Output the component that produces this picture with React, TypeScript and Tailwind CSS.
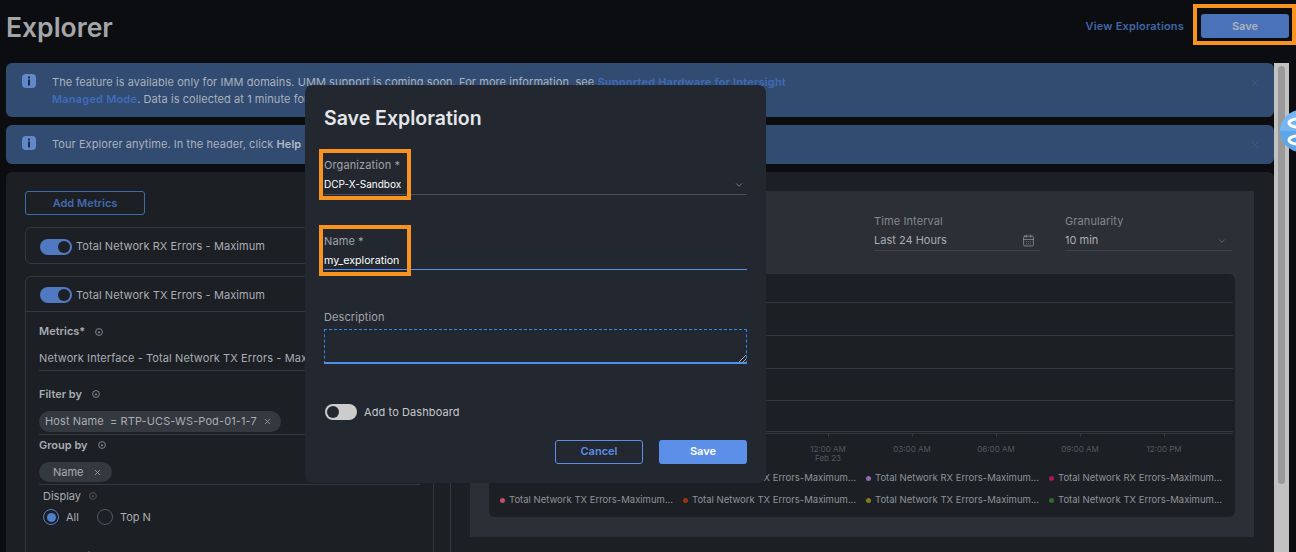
import { ChevronDown, X, CalendarDays } from "lucide-react";

const font = { fontFamily: "Inter, 'Liberation Sans', sans-serif" };

function InfoBadge() {
  return (
    <span className="flex h-[14px] w-[14px] shrink-0 items-center justify-center rounded-[4px] bg-[#6288cc]">
      <svg width="8" height="10" viewBox="0 0 8 10">
        <rect x="3" y="0.5" width="2" height="2" fill="#1f2b40" />
        <rect x="3" y="3.5" width="2" height="6" fill="#1f2b40" />
      </svg>
    </span>
  );
}

function Hint({ className }: { className?: string }) {
  return (
    <svg width="8" height="8" viewBox="0 0 8 8" className={className}>
      <circle cx="4" cy="4" r="3.4" fill="none" stroke="#8d9197" strokeWidth="0.9" />
      <circle cx="4" cy="4.2" r="1" fill="#8d9197" />
    </svg>
  );
}

function Toggle({ on }: { on: boolean }) {
  return on ? (
    <span className="flex h-4 w-8 shrink-0 items-center justify-end rounded-full bg-[#5179c2] pr-[2px]">
      <span className="h-3 w-3 rounded-full bg-[#1c1f24]" />
    </span>
  ) : (
    <span className="flex h-4 w-8 shrink-0 items-center rounded-full bg-[#cccccc] pl-[2px]">
      <span className="h-3 w-3 rounded-full bg-[#23272f]" />
    </span>
  );
}

function Alert({ tall, children }: { tall?: boolean; children: React.ReactNode }) {
  return (
    <div className={`flex rounded-md bg-[#324b70] pl-[16px] pr-[13px] ${tall ? "h-[54px] pt-[11px]" : "h-[39px] pt-[11px]"}`}>
      <InfoBadge />
      <div className="ml-[16px] flex-1 text-[11px] leading-[17px] tracking-[0.07px] text-[#a9b2bf]">{children}</div>
      <X size={12} strokeWidth={1} className="mt-[3px] text-[#566479]" />
    </div>
  );
}

const legendRows = [
  [
    ["RX", "#4f7fc0"],
    ["RX", "#3f9a9a"],
    ["RX", "#8e6bb5"],
    ["RX", "#b0125f"],
  ],
  [
    ["TX", "#c4506a"],
    ["TX", "#9a3412"],
    ["TX", "#857a1e"],
    ["TX", "#2f6b2a"],
  ],
];

const ticks = ["06:00 PM", "09:00 PM", "12:00 AM", "03:00 AM", "06:00 AM", "09:00 AM", "12:00 PM"];

export default function App() {
  return (
    <div style={font} className="relative h-[552px] w-[1296px] overflow-hidden bg-[#0c0d10] text-[#a9adb3]">
      <header className="flex h-[63px] items-start justify-between pl-[6px]">
        <h1 className="mt-[9px] text-[26.5px] font-semibold leading-[36px] text-[#a4a6a9]">Explorer</h1>
        <div className="mt-[14px] flex items-center gap-[17px] pr-[7px]">
          <span className="text-[11px] font-semibold tracking-[0.18px] text-[#3f66a8]">View Explorations</span>
          <button className="block h-6 w-[88px] rounded-[3px] bg-[#4a72b8] text-[11px] font-semibold text-[#aeb4bd]">Save</button>
        </div>
      </header>

      <div className="flex h-[489px]">
        <main className="ml-[6px] flex w-[1268px] flex-col gap-2">
          <Alert tall>
            The feature is available only for IMM domains. UMM support is coming soon. For more information, see{" "}
            <b className="font-semibold tracking-[0.2px] text-[#3f6cb8]">Supported Hardware for Intersight</b>
            <br />
            <b className="font-semibold tracking-[0.2px] text-[#3f6cb8]">Managed Mode</b>. Data is collected at 1 minute for the selected devices.
          </Alert>
          <Alert>
            Tour Explorer anytime. In the header, click <b className="font-semibold text-[#b4bac4]">Help</b> &gt; Tour Explorer.
          </Alert>

          <section className="flex h-[380px] overflow-hidden rounded-t-md bg-[#1c1f24] pl-[19px] pt-[19px]">
            {/* left column */}
            <div className="w-[409px] shrink-0">
              <button className="block h-6 w-[120px] rounded-[3px] border border-[#3f6cb0] text-[11px] font-semibold text-[#4369ad]">Add Metrics</button>
              <div className="mt-3 flex h-[37px] items-center gap-[4px] rounded-md border border-[#34383e] pl-[14px] pt-[2px]">
                <Toggle on />
                <span className="text-[11px] tracking-[0.07px]">Total Network RX Errors - Maximum</span>
              </div>
              <div className="mt-3 h-[400px] rounded-md border border-[#34383e]">
                <div className="flex h-[35px] items-center gap-[4px] border-b border-[#34383e] pl-[14px] pt-[2px]">
                  <Toggle on />
                  <span className="text-[11px] tracking-[0.07px]">Total Network TX Errors - Maximum</span>
                </div>
                <div className="pl-[13px] pr-[13px]">
                  <div className="mt-[12px] flex h-[15px] items-center gap-[10px] text-[11px] font-semibold">
                    Metrics* <Hint />
                  </div>
                  <div className="mt-[11px] h-[21px] whitespace-nowrap border-b border-[#34383e] text-[11px] tracking-[0.1px]">
                    Network Interface - Total Network TX Errors - Maximum
                  </div>
                  <div className="mt-[16px] flex h-[14px] items-center gap-[10px] text-[11px] font-semibold">
                    Filter by <Hint />
                  </div>
                  <div className="mt-[10px] h-[24px] border-b border-[#34383e]">
                    <span className="flex h-[21px] w-[242px] items-center gap-[6px] rounded-full bg-[#34383f] pl-[6px] text-[11px] tracking-[0.12px]">
                      <span>Host Name</span>
                      <span>= RTP-UCS-WS-Pod-01-1-7</span>
                      <X size={9} strokeWidth={2} />
                    </span>
                  </div>
                  <div className="mt-[3px] flex h-[14px] items-center gap-[10px] text-[11px] font-semibold">
                    Group by <Hint />
                  </div>
                  <div className="mt-[10px] h-[23px] border-b border-[#34383e]">
                    <span className="flex h-[20px] w-[73px] items-center gap-[9px] rounded-full bg-[#34383f] pl-[14px] text-[11px]">
                      Name <X size={9} strokeWidth={2} />
                    </span>
                  </div>
                  <div className="ml-[4px] mt-[4px] flex h-[14px] items-center gap-[8px] text-[11px]">
                    Display <Hint className="opacity-50" />
                  </div>
                  <div className="ml-[4px] mt-[6px] flex h-4 items-center text-[11px]">
                    <span className="flex h-4 w-4 items-center justify-center rounded-full border border-[#4f7fc8]">
                      <span className="h-[9px] w-[9px] rounded-full bg-[#4f7fc8]" />
                    </span>
                    <span className="ml-[7px]">All</span>
                    <span className="ml-[18px] h-4 w-4 rounded-full border border-[#55595f]" />
                    <span className="ml-[7px]">Top N</span>
                  </div>
                  <div className="ml-[4px] mt-[23px] flex gap-[9px] text-[11px]">
                    <span>Aggregate</span>
                    <span>Threshold</span>
                  </div>
                </div>
              </div>
            </div>

            {/* right column */}
            <div className="ml-[16px] h-[400px] flex-1 border-l border-[#34383e] pl-[19px] pr-[20px]">
              <div className="h-[346px] bg-[#2c2f35] px-[19px] pt-[24px]">
                <div className="flex h-[59px] justify-end gap-[25px] pr-[3px]">
                  <div className="w-[166px]">
                    <div className="text-[11px] leading-[12px] tracking-[0.1px] text-[#83878d]">Time Interval</div>
                    <div className="mt-[7px] flex h-[17px] items-start justify-between border-b border-[#3d4148] pr-[5px] text-[11px] leading-[12px] text-[#a9adb3]">
                      Last 24 Hours
                      <CalendarDays size={13} strokeWidth={1.2} className="text-[#a4a8ae]" />
                    </div>
                  </div>
                  <div className="w-[167px]">
                    <div className="text-[11px] leading-[12px] tracking-[0.1px] text-[#83878d]">Granularity</div>
                    <div className="mt-[7px] flex h-[17px] items-start justify-between border-b border-[#3d4148] pr-[5px] text-[11px] leading-[12px] text-[#a9adb3]">
                      10 min
                      <ChevronDown size={10} strokeWidth={1.2} className="mt-[2px] text-[#93979d]" />
                    </div>
                  </div>
                </div>
                <div className="h-[243px] rounded-md bg-[#1c1f24] pr-[2px] pt-[28px]">
                  <div className="h-[33px] border-t border-[#34383e]" />
                  <div className="h-[33px] border-t border-[#34383e]" />
                  <div className="h-[32px] border-t border-[#34383e]" />
                  <div className="h-[31px] border-t border-[#34383e]" />
                  <div className="h-[3px] border-y border-[#34383e]" />
                  <div className="flex justify-end pr-[27px] text-[8px] leading-[9px] text-[#55595f]">
                    {ticks.map((t) => (
                      <div key={t} className="flex w-[84px] flex-col items-center">
                        <span className="h-[3px] w-px bg-[#34383e]" />
                        <span className="mt-[8px] whitespace-nowrap">{t}</span>
                        {t === "12:00 AM" && <span>Feb 23</span>}
                      </div>
                    ))}
                  </div>
                  <div className="mt-[-7px] flex flex-col gap-[10px] pl-[11px]">
                    {legendRows.map((row, i) => (
                      <div key={i} className={`grid grid-cols-[183px_183px_183px_183px] text-[9.5px] leading-[12px] text-[#8f9399] ${i === 0 ? "mt-[16px]" : ""}`}>
                        {row.map(([k, c]) => (
                          <div key={c} className="flex items-center gap-[4px] whitespace-nowrap">
                            <span className="h-[5px] w-[5px] shrink-0 rounded-full" style={{ backgroundColor: c }} />
                            Total Network {k} Errors-Maximum...
                          </div>
                        ))}
                      </div>
                    ))}
                  </div>
                </div>
              </div>
            </div>
          </section>
        </main>

        <div className="h-full w-[15px] bg-[#c2c2c2] px-[4px] pt-[3px]">
          <div className="h-[418px] rounded-full bg-[#9a9a9a]" />
        </div>
      </div>

      {/* help bubble */}
      <svg width="16" height="42" viewBox="0 0 16 42" className="absolute left-[1280px] top-[110px]">
        <path d="M21 0a21 21 0 0 0-21 21h21z" fill="#74b6f2" />
        <path d="M21 42a21 21 0 0 1-21-21h21z" fill="#5ea6e6" />
        <ellipse cx="18" cy="13" rx="9" ry="4" fill="none" stroke="#ffffff" strokeWidth="3" />
        <ellipse cx="18" cy="30" rx="9" ry="4" fill="none" stroke="#ffffff" strokeWidth="3" />
      </svg>

      {/* modal */}
      <div className="absolute left-[305px] top-[85px] h-[398px] w-[461px] rounded-lg bg-[#23272f] px-[19px] pt-[21px]">
        <h2 className="whitespace-nowrap text-[19.5px] font-semibold leading-[24px] text-[#e4e6ea]">Save Exploration</h2>
        <label className="mt-[28px] block text-[11px] leading-[14px] tracking-[0.1px] text-[#a0a4ab]">Organization *</label>
        <div className="mt-[5px] flex h-[18px] items-start justify-between border-b border-[#4a4e55] text-[10px] leading-[14px] text-white">
          DCP-X-Sandbox
          <ChevronDown size={10} strokeWidth={1.3} className="mr-[3px] mt-[3px] text-[#c0c3c8]" />
        </div>
        <label className="mt-[39px] block text-[11px] leading-[14px] tracking-[0.1px] text-[#a0a4ab]">Name *</label>
        <div className="mt-[5px] h-[17px] border-b border-[#5b8fe8] pt-px text-[10.7px] leading-[14px] text-white">my_exploration</div>
        <label className="mt-[40px] block text-[11px] leading-[14px] tracking-[0.1px] text-[#a0a4ab]">Description</label>
        <div className="relative mt-[5px] h-[35px] border border-b-0 border-dashed border-[#2f86e6]">
          <div className="absolute inset-x-[-1px] bottom-0 h-[2px] bg-[#4f8fe8]" />
          <svg width="7" height="7" viewBox="0 0 7 7" className="absolute bottom-[2px] right-0">
            <path d="M0 7 7 0M4 7l3-3" stroke="#c8cacd" strokeWidth="0.8" />
          </svg>
        </div>
        <div className="ml-[1px] mt-[40px] flex items-center gap-[7px] text-[11px] tracking-[0.1px] text-[#c5c8cc]">
          <Toggle on={false} />
          Add to Dashboard
        </div>
        <div className="mt-[19px] flex justify-end gap-4">
          <button className="block h-6 w-[88px] rounded-[3px] border border-[#5b8fe8] text-[11px] font-semibold text-[#5b8fe8]">Cancel</button>
          <button className="block h-6 w-[88px] rounded-[3px] bg-[#5b8fe8] text-[11px] font-semibold text-white">Save</button>
        </div>
      </div>

      {/* orange highlights */}
      <div className="absolute left-[1193px] top-[4px] h-[41px] w-[103px] border-4 border-[#f7931e]" />
      <div className="absolute left-[319px] top-[149px] h-[51px] w-[92px] border-4 border-[#f7931e]" />
      <div className="absolute left-[319px] top-[225px] h-[51px] w-[92px] border-4 border-[#f7931e]" />
    </div>
  );
}
